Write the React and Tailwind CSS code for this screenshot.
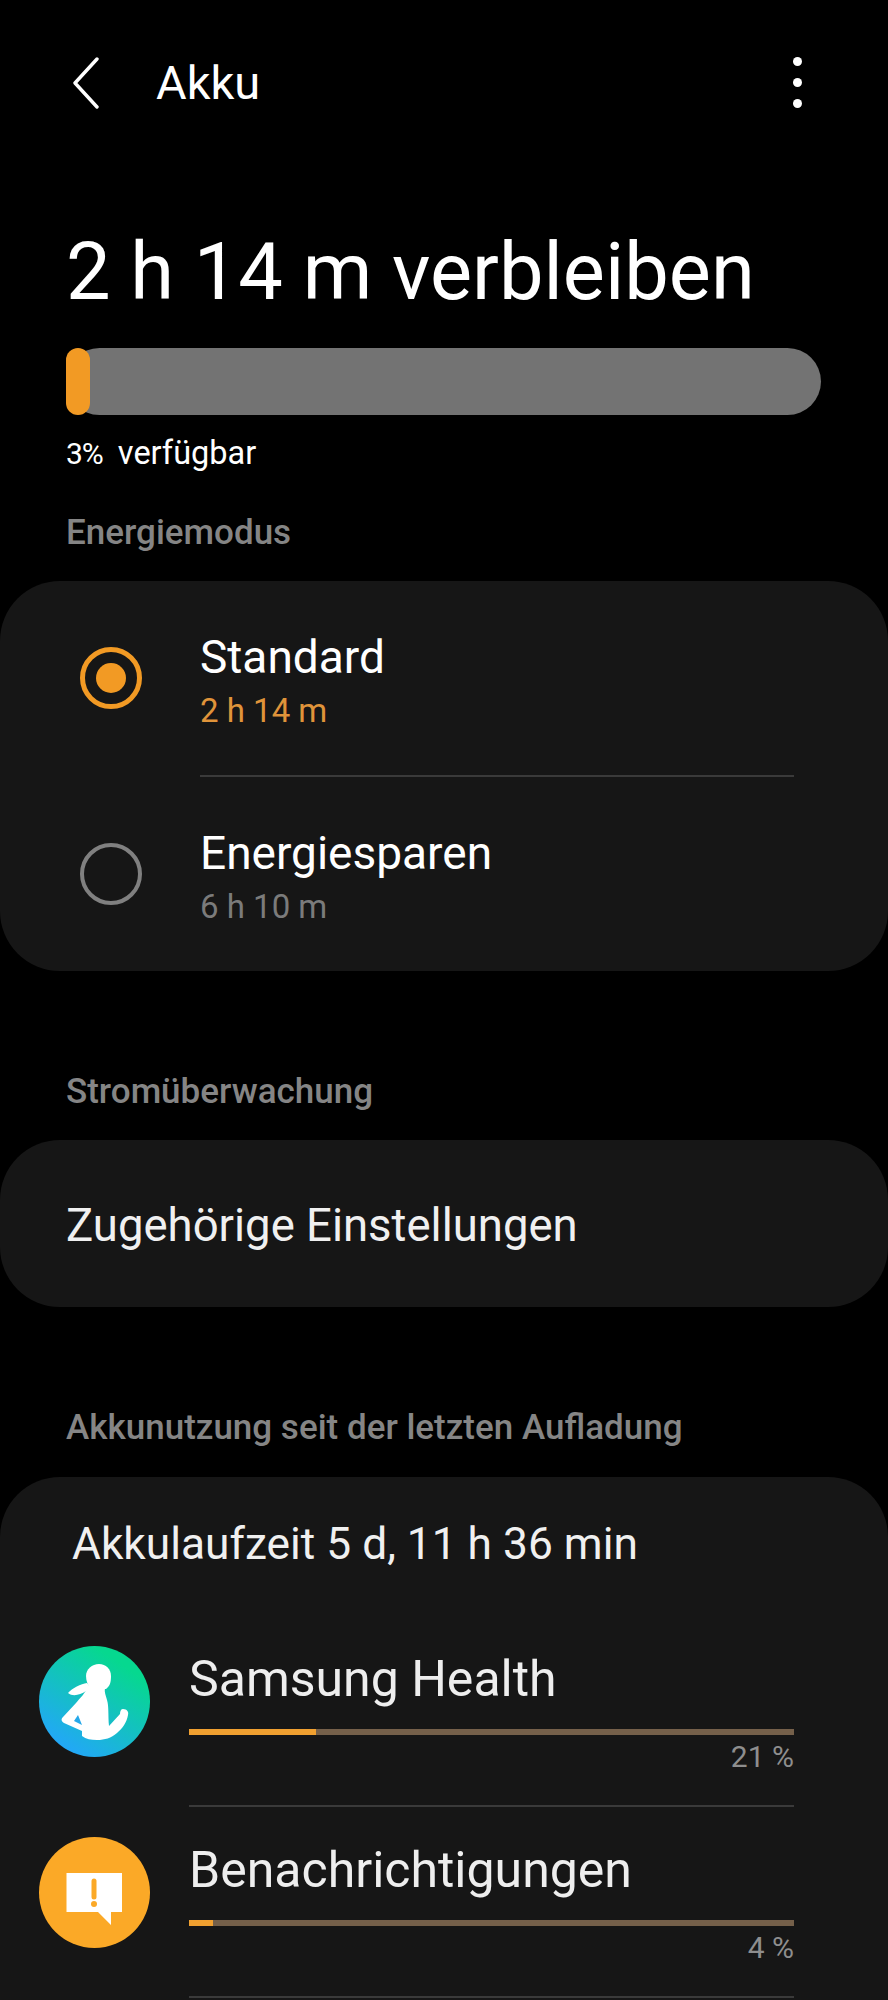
import React from "react";

function Back() {
  return (
    <svg width="30" height="52" viewBox="0 0 30 52" fill="none">
      <path d="M26 2 L4 26 L26 50" stroke="#fff" strokeWidth="3.4" strokeLinecap="round" strokeLinejoin="round" />
    </svg>
  );
}

function Radio({ on }) {
  return on ? (
    <div className="w-[62px] h-[62px] rounded-full border-[5px] border-[#f29a24] flex items-center justify-center shrink-0">
      <div className="w-[30px] h-[30px] rounded-full bg-[#f29a24]" />
    </div>
  ) : (
    <div className="w-[62px] h-[62px] rounded-full border-[4px] border-[#808080] shrink-0" />
  );
}

function HealthIcon() {
  return (
    <svg width="111" height="111" viewBox="0 0 111 111" className="shrink-0">
      <defs>
        <linearGradient id="sh" x1="0.8" y1="0.2" x2="0.3" y2="0.95">
          <stop offset="0" stopColor="#06d88f" />
          <stop offset="1" stopColor="#22a8f6" />
        </linearGradient>
      </defs>
      <circle cx="55.5" cy="55.5" r="55.5" fill="url(#sh)" />
      <path d="M60 18 C67 18 72 23 72 30 C72 36 71 40 67 43 L52 43 C49 40 47 35 47 30 C47 23 53 18 60 18 Z" fill="#fff" />
      <path d="M48 37 C42 38 33 42 29 47 C34 51 41 49 47 45 L52 42 Z" fill="#fff" />
      <path d="M49 40 L66 42 C65 46 67 50 68 54 C70 60 69 70 70 80 L81 68 C81 65 82 63 84 63 C88 63 90 66 89 69 C88 76 83 83 78 87 C72 92 66 94 58 94 C52 94 47 93 43 90 L43 85 L25 77 C22 75 22 73 24 71 L37 57 C41 52 46 48 49 40 Z" fill="#fff" />
      <path d="M39 69 L35 75 L43 79 Z" fill="#25a8ea" />
    </svg>
  );
}

function NotifyIcon() {
  return (
    <svg width="111" height="111" viewBox="0 0 111 111" className="shrink-0">
      <circle cx="55.5" cy="55.5" r="55.5" fill="#fba927" />
      <path d="M27.5 36 H83 V75 H72 V88 L59 75 H27.5 Z" fill="#fff" />
      <path d="M55 44 V60" stroke="#fba927" strokeWidth="5" strokeLinecap="round" />
      <circle cx="55" cy="67" r="3" fill="#fba927" />
    </svg>
  );
}

function Bar({ fill }) {
  return (
    <div className="h-[6px] bg-[#75604a] w-full">
      <div className="h-full bg-[#f0a030]" style={{ width: fill }} />
    </div>
  );
}

function AppRow({ icon, name, pct, fill }) {
  return (
    <div className="flex items-start">
      <div className="pl-[39px] pr-[39px] pt-[30px]">{icon}</div>
      <div className="w-[605px]">
        <div className="h-[191px] border-b-2 border-[#3a3a3a]">
          <div className="text-[50px] leading-[52px] text-[#eeeeee] pt-[37px] h-[113px]">{name}</div>
          <Bar fill={fill} />
          <div className="text-[30px] leading-[32px] text-right text-[#8e8e8e] mt-[6px]">{pct}</div>
        </div>
      </div>
    </div>
  );
}

function Label({ children, className }) {
  return <div className={"text-[35px] leading-[36px] font-medium text-[#858585] pl-[66px] " + className}>{children}</div>;
}

export default function App() {
  return (
    <div className="w-[888px] h-[2000px] overflow-hidden bg-black text-white" style={{ fontFamily: "Roboto, sans-serif" }}>
      <div className="flex items-center h-[52px] mt-[57px] pl-[71px] pr-[86px]">
        <Back />
        <div className="ml-[55px] text-[47px] leading-[52px]">Akku</div>
        <div className="ml-auto flex flex-col gap-[12px] -mt-[2px]">
          <div className="w-[9px] h-[9px] rounded-full bg-white" />
          <div className="w-[9px] h-[9px] rounded-full bg-white" />
          <div className="w-[9px] h-[9px] rounded-full bg-white" />
        </div>
      </div>

      <div className="pl-[66px] mt-[118px] text-[79.4px] leading-[90px] h-[90px]">2 h 14 m verbleiben</div>

      <div className="ml-[66px] mt-[31px] w-[755px] h-[67px] rounded-full bg-[#737373]">
        <div className="w-[24px] h-full rounded-full bg-[#f29a24]" />
      </div>

      <div className="pl-[66px] mt-[19px] h-[38px] leading-[38px] flex items-baseline gap-[15px]">
        <span className="text-[30px] tracking-[-1px]">3%</span>
        <span className="text-[32.5px]">verfügbar</span>
      </div>

      <Label className="mt-[43px]">Energiemodus</Label>

      <div className="mt-[30px] h-[390px] rounded-[60px] bg-[#161616] relative">
        <div className="flex items-center h-[194px] pl-[80px]">
          <Radio on />
          <div className="ml-[58px] mt-[4px]">
            <div className="text-[46px] leading-[52px]">Standard</div>
            <div className="text-[33px] leading-[38px] mt-[9px] text-[#e0943a]">2 h 14 m</div>
          </div>
        </div>
        <div className="ml-[200px] w-[594px] h-[2px] bg-[#3a3a3a]" />
        <div className="flex items-center h-[194px] pl-[80px]">
          <Radio />
          <div className="ml-[58px] mt-[4px]">
            <div className="text-[46px] leading-[52px]">Energiesparen</div>
            <div className="text-[33px] leading-[38px] mt-[9px] text-[#7b7b7b]">6 h 10 m</div>
          </div>
        </div>
      </div>

      <Label className="mt-[103px]">Stromüberwachung</Label>

      <div className="mt-[30px] h-[167px] rounded-[60px] bg-[#161616] flex items-center pl-[66px] pt-[5px] text-[45.5px] text-[#f0f0f0]">
        Zugehörige Einstellungen
      </div>

      <Label className="mt-[103px]">Akkunutzung seit der letzten Aufladung</Label>

      <div className="mt-[31px] rounded-t-[60px] bg-[#161616] h-[600px]">
        <div className="pl-[72px] pt-[41px] h-[139px] text-[44.3px] leading-[52px] text-[#f0f0f0]">Akkulaufzeit 5 d, 11 h 36 min</div>
        <AppRow icon={<HealthIcon />} name="Samsung Health" pct="21 %" fill="21%" />
        <AppRow icon={<NotifyIcon />} name="Benachrichtigungen" pct="4 %" fill="4%" />
      </div>
    </div>
  );
}
